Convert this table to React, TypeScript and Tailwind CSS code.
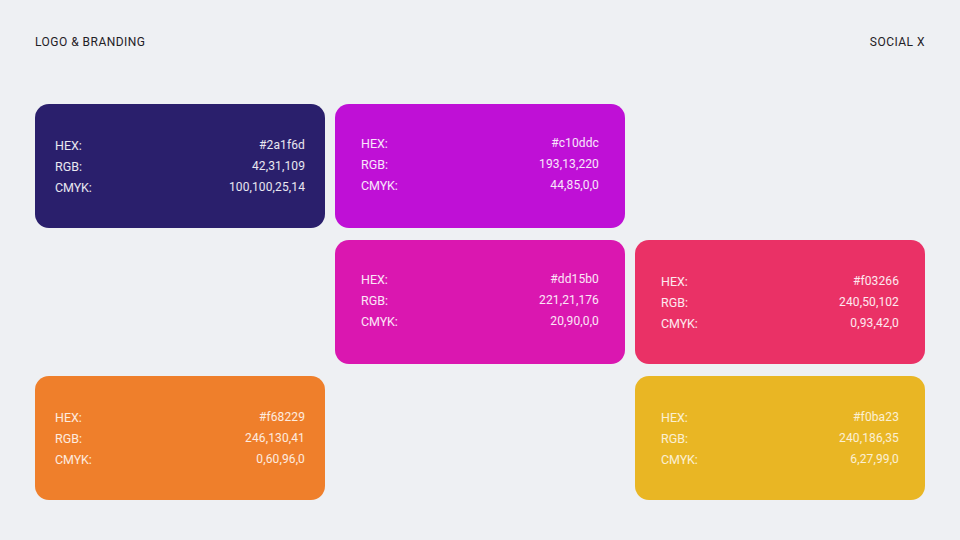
import React from "react";

type Swatch = {
  hex: string;
  rgb: string;
  cmyk: string;
  bg: string;
  pad: string;
  text: string;
};

const rows: (Swatch | null)[] = [
  {
    hex: "#2a1f6d",
    rgb: "42,31,109",
    cmyk: "100,100,25,14",
    bg: "bg-[#2a1f6c]",
    pad: "px-[20px] pt-[1px]",
    text: "text-white/90",
  },
  {
    hex: "#c10ddc",
    rgb: "193,13,220",
    cmyk: "44,85,0,0",
    bg: "bg-[#bf10d6]",
    pad: "px-[26px] pb-[3px]",
    text: "text-white/90",
  },
  null,
  null,
  {
    hex: "#dd15b0",
    rgb: "221,21,176",
    cmyk: "20,90,0,0",
    bg: "bg-[#da17b0]",
    pad: "px-[26px] pb-[3px]",
    text: "text-white/90",
  },
  {
    hex: "#f03266",
    rgb: "240,50,102",
    cmyk: "0,93,42,0",
    bg: "bg-[#ea3166]",
    pad: "px-[26px]",
    text: "text-white/90",
  },
  {
    hex: "#f68229",
    rgb: "246,130,41",
    cmyk: "0,60,96,0",
    bg: "bg-[#ef7f2b]",
    pad: "px-[20px] pt-[1px]",
    text: "text-white/85",
  },
  null,
  {
    hex: "#f0ba23",
    rgb: "240,186,35",
    cmyk: "6,27,99,0",
    bg: "bg-[#e9b624]",
    pad: "px-[26px]",
    text: "text-white/80",
  },
];

const Card = ({ s }: { s: Swatch }) => (
  <div
    className={`h-[124px] rounded-[14px] ${s.bg} ${s.pad} ${s.text} flex flex-col justify-center text-[12.5px] leading-[21px]`}
  >
    <div className="flex justify-between">
      <span>HEX:</span>
      <span className="text-[12px] tracking-[0.01em]">{s.hex}</span>
    </div>
    <div className="flex justify-between">
      <span>RGB:</span>
      <span className="text-[12px] tracking-[0.01em]">{s.rgb}</span>
    </div>
    <div className="flex justify-between">
      <span className="tracking-[-0.01em]">CMYK:</span>
      <span className="text-[12px] tracking-[0.01em]">{s.cmyk}</span>
    </div>
  </div>
);

export default function App() {
  return (
    <div
      className="w-[960px] h-[540px] bg-[#eef0f3] px-[35px] pt-[35px] overflow-hidden"
      style={{ fontFamily: 'Roboto, "DejaVu Sans", sans-serif' }}
    >
      <div className="flex justify-between text-[12px] leading-[14px] tracking-[0.04em] text-[#1f2026]">
        <span>LOGO &amp; BRANDING</span>
        <span>SOCIAL X</span>
      </div>
      <div className="mt-[55px] grid grid-cols-3 gap-x-[10px] gap-y-[12px]">
        {rows.map((s, i) => (s ? <Card key={i} s={s} /> : <div key={i} />))}
      </div>
    </div>
  );
}
